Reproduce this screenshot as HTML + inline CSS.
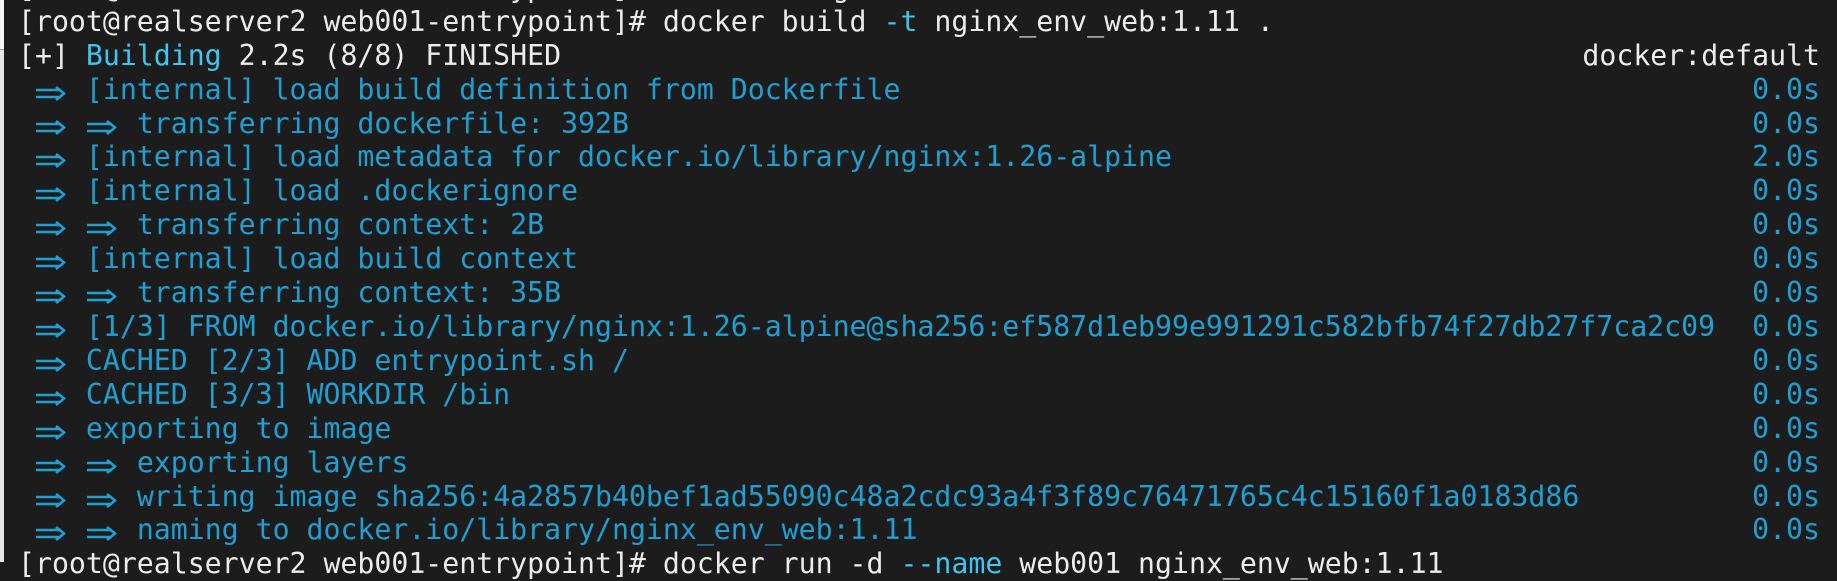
<!DOCTYPE html>
<html><head><meta charset="utf-8"><style>
html,body{margin:0;padding:0;background:#1c1c1c;width:1837px;height:562px;overflow:hidden}
.strip{position:absolute;left:0;top:0;width:4px;height:562px;background:#e6e6e6}
.strip2{position:absolute;left:0;top:0;width:4px;height:49px;background:#f6f6f6;border-bottom:1px solid #999}
.l{position:absolute;left:18px;white-space:pre;font-family:"DejaVu Sans Mono","Liberation Mono",monospace;font-size:28.2px;line-height:34px;height:34px;color:#1f9fd2}
.r{position:absolute;right:17px;white-space:pre;font-family:"DejaVu Sans Mono","Liberation Mono",monospace;font-size:28.2px;line-height:34px;color:#1f9fd2}
.w{color:#ececec}.c{color:#3ec6ef}
.a{display:inline-block;width:2ch;height:34px;vertical-align:top;position:relative}
.a svg{position:absolute;left:1px;top:13px}
</style></head><body>
<svg width="0" height="0" style="position:absolute"><defs><symbol id="ar" viewBox="0 0 30 15"><path d="M0 4H25M0 11H25M20 1L28 7.5L20 14" fill="none" stroke="#1f9fd2" stroke-width="2.6"/></symbol></defs></svg>
<div class="strip"></div><div class="strip2"></div>
<div class="l w" style="top:-29px">[root@realserver2 web001-entrypoint]# docker images</div>
<div class="l w" style="top:5px">[root@realserver2 web001-entrypoint]# docker build <span class="c">-t</span> nginx_env_web:1.11 .</div>
<div class="l w" style="top:39px">[+] <span class="c">Building</span> 2.2s (8/8) FINISHED</div><div class="r w" style="top:39px">docker:default</div>
<div class="l" style="top:73px"> <span class="a"><svg width="30" height="15"><use href="#ar"/></svg></span> [internal] load build definition from Dockerfile</div><div class="r" style="top:73px">0.0s</div>
<div class="l" style="top:107px"> <span class="a"><svg width="30" height="15"><use href="#ar"/></svg></span> <span class="a"><svg width="30" height="15"><use href="#ar"/></svg></span> transferring dockerfile: 392B</div><div class="r" style="top:107px">0.0s</div>
<div class="l" style="top:140px"> <span class="a"><svg width="30" height="15"><use href="#ar"/></svg></span> [internal] load metadata for docker.io/library/nginx:1.26-alpine</div><div class="r" style="top:140px">2.0s</div>
<div class="l" style="top:174px"> <span class="a"><svg width="30" height="15"><use href="#ar"/></svg></span> [internal] load .dockerignore</div><div class="r" style="top:174px">0.0s</div>
<div class="l" style="top:208px"> <span class="a"><svg width="30" height="15"><use href="#ar"/></svg></span> <span class="a"><svg width="30" height="15"><use href="#ar"/></svg></span> transferring context: 2B</div><div class="r" style="top:208px">0.0s</div>
<div class="l" style="top:242px"> <span class="a"><svg width="30" height="15"><use href="#ar"/></svg></span> [internal] load build context</div><div class="r" style="top:242px">0.0s</div>
<div class="l" style="top:276px"> <span class="a"><svg width="30" height="15"><use href="#ar"/></svg></span> <span class="a"><svg width="30" height="15"><use href="#ar"/></svg></span> transferring context: 35B</div><div class="r" style="top:276px">0.0s</div>
<div class="l" style="top:310px"> <span class="a"><svg width="30" height="15"><use href="#ar"/></svg></span> [1/3] FROM docker.io/library/nginx:1.26-alpine@sha256:ef587d1eb99e991291c582bfb74f27db27f7ca2c09</div><div class="r" style="top:310px">0.0s</div>
<div class="l" style="top:344px"> <span class="a"><svg width="30" height="15"><use href="#ar"/></svg></span> CACHED [2/3] ADD entrypoint.sh /</div><div class="r" style="top:344px">0.0s</div>
<div class="l" style="top:378px"> <span class="a"><svg width="30" height="15"><use href="#ar"/></svg></span> CACHED [3/3] WORKDIR /bin</div><div class="r" style="top:378px">0.0s</div>
<div class="l" style="top:412px"> <span class="a"><svg width="30" height="15"><use href="#ar"/></svg></span> exporting to image</div><div class="r" style="top:412px">0.0s</div>
<div class="l" style="top:446px"> <span class="a"><svg width="30" height="15"><use href="#ar"/></svg></span> <span class="a"><svg width="30" height="15"><use href="#ar"/></svg></span> exporting layers</div><div class="r" style="top:446px">0.0s</div>
<div class="l" style="top:480px"> <span class="a"><svg width="30" height="15"><use href="#ar"/></svg></span> <span class="a"><svg width="30" height="15"><use href="#ar"/></svg></span> writing image sha256:4a2857b40bef1ad55090c48a2cdc93a4f3f89c76471765c4c15160f1a0183d86</div><div class="r" style="top:480px">0.0s</div>
<div class="l" style="top:513px"> <span class="a"><svg width="30" height="15"><use href="#ar"/></svg></span> <span class="a"><svg width="30" height="15"><use href="#ar"/></svg></span> naming to docker.io/library/nginx_env_web:1.11</div><div class="r" style="top:513px">0.0s</div>
<div class="l w" style="top:547px">[root@realserver2 web001-entrypoint]# docker run -d <span class="c">--name</span> web001 nginx_env_web:1.11</div>
</body></html>
